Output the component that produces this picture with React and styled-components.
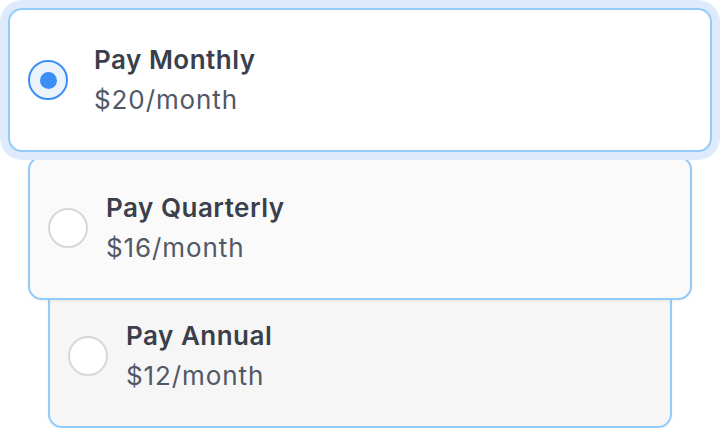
import React from 'react';
import styled, { createGlobalStyle } from 'styled-components';

const plans = [
    { id: 'monthly', title: 'Pay Monthly', price: '$20/month', width: 704, gap: 26, bg: '#ffffff', top: 0, z: 3 },
    { id: 'quarterly', title: 'Pay Quarterly', price: '$16/month', width: 664, gap: 18, bg: '#fafafa', top: 4, z: 2 },
    { id: 'annual', title: 'Pay Annual', price: '$12/month', width: 624, gap: 18, bg: '#f6f6f6', top: -16, z: 1 },
];

function App() {
    const selected = 'monthly';

    return (
        <>
            <GlobalStyle />
            <Stack>
                {plans.map((plan) => {
                    const active = plan.id === selected;
                    return (
                        <Card
                            key={plan.id}
                            $width={plan.width}
                            $gap={plan.gap}
                            $bg={plan.bg}
                            $top={plan.top}
                            $z={plan.z}
                            $active={active}
                        >
                            <Radio $checked={active}>
                                {active && <Dot />}
                            </Radio>
                            <Text>
                                <Title>{plan.title}</Title>
                                <Price>{plan.price}</Price>
                            </Text>
                        </Card>
                    );
                })}
            </Stack>
        </>
    );
}

export default App;

const GlobalStyle = createGlobalStyle`
    html, body {
        margin: 0;
        background: #ffffff;
    }
    body {
        font-family: Inter, "Noto Sans", sans-serif;
    }
`;

const Stack = styled.div`
    width: 720px;
    padding-top: 8px;
    display: flex;
    flex-direction: column;
    align-items: center;
`;

const Card = styled.div`
    position: relative;
    z-index: ${(p) => p.$z};
    box-sizing: border-box;
    width: ${(p) => p.$width}px;
    height: 144px;
    margin-top: ${(p) => p.$top}px;
    padding: 0 18px;
    display: flex;
    align-items: center;
    gap: ${(p) => p.$gap}px;
    background: ${(p) => p.$bg};
    border: 2px solid #93cbfb;
    border-radius: 14px;
    box-shadow: ${(p) => (p.$active
        ? '0 0 0 8px #deebfd'
        : '0 1px 3px rgba(0, 0, 0, 0.07)')};
`;

const Radio = styled.div`
    box-sizing: border-box;
    flex: none;
    width: 40px;
    height: 40px;
    border-radius: 50%;
    border: 2px solid ${(p) => (p.$checked ? '#3b8ef5' : '#d5d7db')};
    background: ${(p) => (p.$checked ? '#ebf3fe' : '#ffffff')};
    display: flex;
    align-items: center;
    justify-content: center;
`;

const Dot = styled.span`
    width: 17px;
    height: 17px;
    border-radius: 50%;
    background: #3b8ef5;
`;

const Text = styled.div`
    display: flex;
    flex-direction: column;
    font-size: 26px;
    line-height: 40px;
`;

const Title = styled.div`
    font-weight: 600;
    letter-spacing: 0.5px;
    color: #3a3f4b;
`;

const Price = styled.div`
    font-weight: 400;
    letter-spacing: 0.9px;
    color: #515866;
`;
